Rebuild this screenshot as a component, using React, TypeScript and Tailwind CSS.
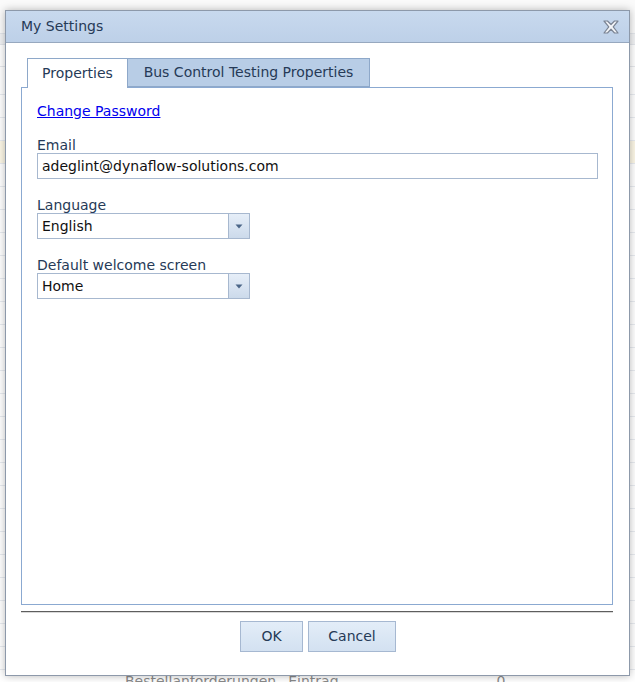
import React from 'react';

const rows = Array.from({ length: 27 });

const ComboBox = ({ value }: { value: string }) => (
  <div className="flex h-[26px] w-[213px] border border-[#a7b8cf] bg-white">
    <div className="flex flex-1 items-center pl-[4px] text-[14px] text-[#111]">{value}</div>
    <div className="flex w-[21px] items-center justify-center border-l border-[#a7b8cf] bg-gradient-to-b from-[#e6eef8] to-[#ccdaeb]">
      <svg width="8" height="5" viewBox="0 0 8 5">
        <path d="M0.5 0.5 L7.5 0.5 L4 4.5 Z" fill="#4c6688" />
      </svg>
    </div>
  </div>
);

export default function App() {
  return (
    <div className="relative h-[682px] w-[635px] overflow-hidden bg-white font-['DejaVu_Sans',sans-serif]">
      {/* page behind the dialog */}
      <div className="flex flex-col">
        <div className="h-[33px] bg-[#fafafa]" />
        <div className="h-[12px] border-y border-[#e3e6eb] bg-[#f1f2f4]" />
        <div className="h-[22px] border-b border-[#e6e8ec]" />
        <div className="h-[5px]" />
        {rows.map((_, i) => (
          <div
            key={i}
            className={`flex h-[23px] items-center border-b border-[#e8ebf0] text-[14px] text-[#8a8a8a] ${i === 3 ? 'bg-[#fcf7e6]' : ''}`}
          >
            {i === 26 && (
              <>
                <span className="ml-[125px]">Bestellanforderungen</span>
                <span className="ml-[12px]">Eintrag</span>
                <span className="ml-[158px]">0</span>
              </>
            )}
          </div>
        ))}
      </div>

      {/* dialog */}
      <div className="absolute left-[5px] top-[10px] flex h-[666px] w-[625px] flex-col border border-[#8d99aa] bg-white shadow-[0_0_8px_rgba(0,0,0,0.28)]">
        <div className="flex h-[32px] items-center justify-between border-b border-[#97a8bf] bg-gradient-to-b from-[#c8d9ee] to-[#bdd0e8] pl-[15px] pr-[10px]">
          <span className="text-[14px] text-[#263a57]">My Settings</span>
          <svg width="16" height="14" viewBox="0 0 16 14">
            <polygon
              points="1,1 4.5,1 8,4.5 11.5,1 15,1 10.2,6.8 15,13 11.5,13 8,9.2 4.5,13 1,13 5.8,6.8"
              fill="#f3f5f8"
              stroke="#7b8493"
              strokeWidth="1.2"
              strokeLinejoin="round"
            />
          </svg>
        </div>

        <div className="flex flex-col pl-[15px] pt-[15px]">
          {/* tabs */}
          <div className="relative z-10 flex h-[29px] pl-[6px]">
            <div className="flex h-[30px] w-[101px] items-center justify-center border border-b-0 border-[#8ea8c9] bg-white text-[14px] text-[#263a57]">
              Properties
            </div>
            <div className="flex h-[29px] w-[242px] items-center justify-center border border-l-0 border-[#8ea8c9] bg-[#b8cde6] text-[14px] text-[#263a57]">
              Bus Control Testing Properties
            </div>
          </div>

          {/* panel */}
          <div className="flex h-[518px] w-[592px] flex-col border border-[#8ba9d1] px-[15px] pt-[15px]">
            <a href="#" className="self-start text-[14px] leading-[16px] text-[#0000ee] underline">
              Change Password
            </a>

            <div className="mt-[18px] text-[14px] leading-[16px] text-[#263a57]">Email</div>
            <div className="flex h-[26px] w-[561px] items-center border border-[#a7b8cf] pl-[4px] text-[14px] text-[#111]">
              adeglint@dynaflow-solutions.com
            </div>

            <div className="mt-[18px] text-[14px] leading-[16px] text-[#263a57]">Language</div>
            <ComboBox value="English" />

            <div className="mt-[18px] text-[14px] leading-[16px] text-[#263a57]">Default welcome screen</div>
            <ComboBox value="Home" />
          </div>

          <div className="mt-[6px] h-[2px] w-[592px] border-t border-[#5e5e5e] border-b border-b-[#d9d9d9]" />

          <div className="mt-[8px] flex w-[592px] justify-center gap-[5px] pl-[2px]">
            <button className="h-[31px] w-[63px] border border-[#a6b8d1] bg-gradient-to-b from-[#e3edf8] to-[#d3e1f1] text-[14px] text-[#263a57]">
              OK
            </button>
            <button className="h-[31px] w-[88px] border border-[#a6b8d1] bg-gradient-to-b from-[#e3edf8] to-[#d3e1f1] text-[14px] text-[#263a57]">
              Cancel
            </button>
          </div>
        </div>
      </div>
    </div>
  );
}
